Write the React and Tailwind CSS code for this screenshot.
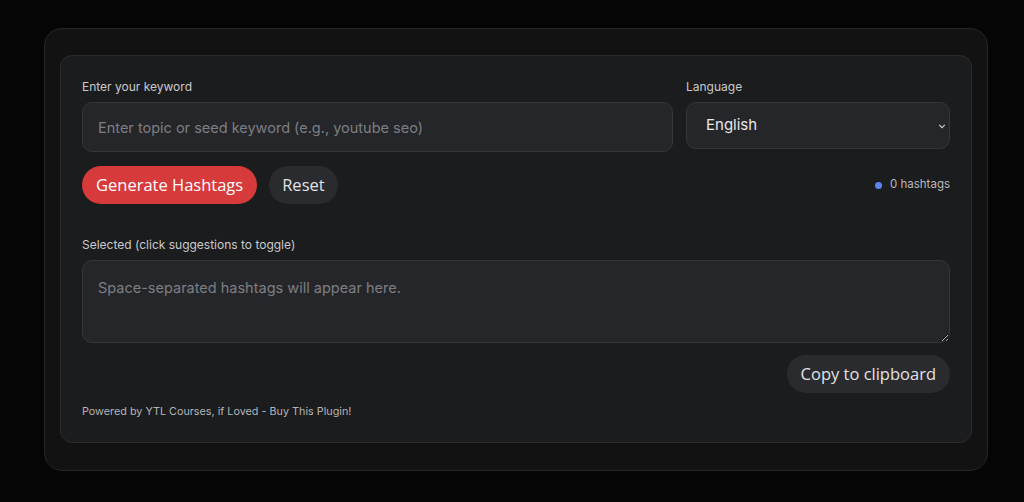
import React, { useState } from 'react';

const sans = { fontFamily: 'Inter, "Noto Sans", sans-serif' };
const btn = { fontFamily: '"Open Sans", Lato, sans-serif' };

export default function App() {
  const [keyword, setKeyword] = useState('');
  const [lang, setLang] = useState('English');

  return (
    <div className="min-h-[502px] w-full bg-[#050505] pl-[44px] pr-[36px] pt-[28px] pb-[32px]" style={sans}>
      {/* outer shell */}
      <div className="rounded-[18px] border border-[#262626] bg-[#121212] px-[15px] pt-[26px] pb-[27px]">
        {/* inner card */}
        <div className="rounded-[12px] border border-[#2a2b2e] bg-[#1b1c1e] px-[21px] pt-[23px] pb-[23px]">
          <div className="grid grid-cols-[1fr_264px] gap-[13px]">
            <div>
              <label className="block text-[12px] leading-[16px] text-[#c9c9cc]">Enter your keyword</label>
              <input
                value={keyword}
                onChange={(e) => setKeyword(e.target.value)}
                placeholder="Enter topic or seed keyword (e.g., youtube seo)"
                className="mt-[7px] h-[50px] w-full rounded-[10px] border border-[#35363a] bg-[#25262a] px-[15px] text-[14.5px] text-[#e5e5e5] outline-none placeholder:text-[#7d7e83]"
              />
            </div>
            <div>
              <label className="block text-[12px] leading-[16px] text-[#c9c9cc]">Language</label>
              <div className="relative mt-[7px]">
                <select
                  value={lang}
                  onChange={(e) => setLang(e.target.value)}
                  className="h-[47px] w-full appearance-none rounded-[10px] border border-[#35363a] bg-[#25262a] px-[19px] text-[15px] text-[#e8e8ea] outline-none"
                >
                  <option>English</option>
                  <option>Spanish</option>
                  <option>French</option>
                </select>
                <svg className="pointer-events-none absolute right-[4px] top-[20px] h-[8px] w-[8px] text-[#cfcfd2]" viewBox="0 0 10 10" fill="none" stroke="currentColor" strokeWidth="1.4">
                  <path d="M1.5 3.5 5 7l3.5-3.5" />
                </svg>
              </div>
            </div>
          </div>

          <div className="mt-[14px] flex items-center">
            <button className="h-[38px] rounded-full bg-[#d63a3a] px-[14px] text-[16.5px] text-white" style={btn}>
              Generate Hashtags
            </button>
            <button className="ml-[12px] h-[38px] rounded-full bg-[#2a2b2e] px-[13px] text-[16.5px] text-[#e2e2e4]" style={btn}>
              Reset
            </button>
            <div className="ml-auto flex items-center gap-[8px] text-[11.5px] text-[#b8b8bc]">
              <span className="h-[7px] w-[7px] rounded-full bg-[#5b86f0]" />
              0 hashtags
            </div>
          </div>

          <label className="mt-[33px] block text-[12px] leading-[16px] text-[#c9c9cc]">Selected (click suggestions to toggle)</label>
          <textarea
            readOnly
            placeholder="Space-separated hashtags will appear here."
            className="mt-[7px] block h-[83px] w-full resize-y rounded-[10px] border border-[#35363a] bg-[#25262a] px-[15px] py-[16px] text-[14.5px] text-[#e5e5e5] outline-none placeholder:text-[#7d7e83]"
          />

          <div className="mt-[12px] flex justify-end">
            <button className="h-[38px] rounded-full bg-[#2a2b2e] px-[14px] text-[16.5px] text-[#e2e2e4]" style={btn}>
              Copy to clipboard
            </button>
          </div>

          <p className="mt-[12px] text-[10.8px] leading-[14px] text-[#b4b4b8]">Powered by YTL Courses, if Loved - Buy This Plugin!</p>
        </div>
      </div>
    </div>
  );
}
